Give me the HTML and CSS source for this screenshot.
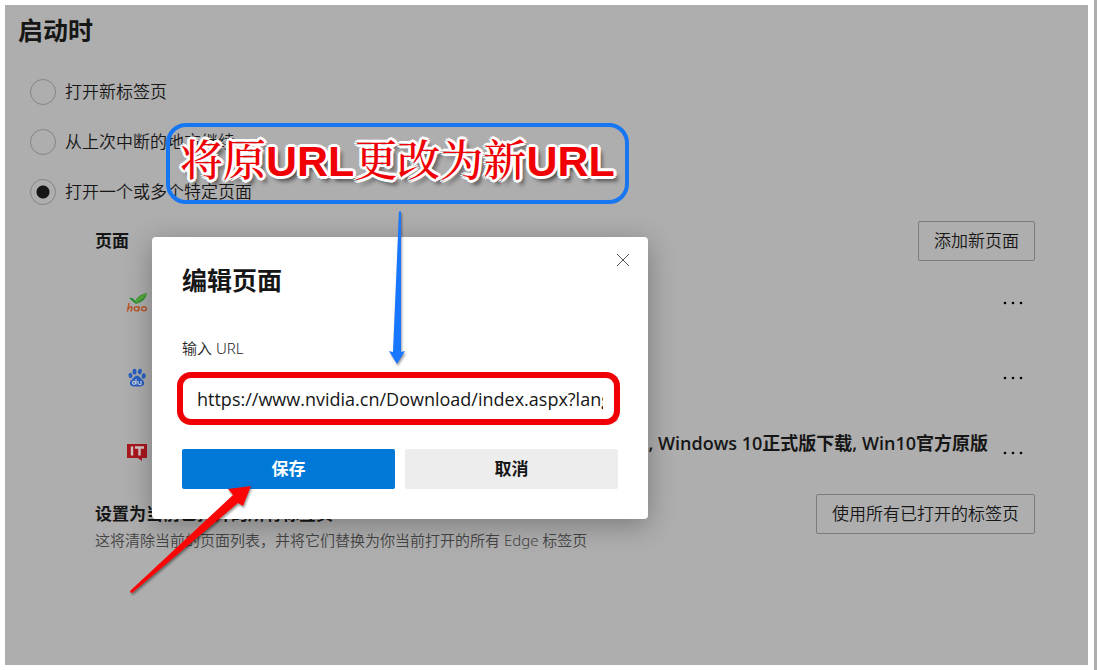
FILE: index.html
```html
<!DOCTYPE html>
<html lang="zh-CN">
<head>
<meta charset="utf-8">
<meta name="viewport" content="width=device-width, initial-scale=1">
<title>启动时</title>
<link rel="stylesheet" href="styles.css">
</head>
<body>
<main class="panel">
  <h1 class="panel-title">启动时</h1>
  <div class="options" role="radiogroup" aria-label="启动时">
    <label class="option"><input class="radio" type="radio" name="startup"><span>打开新标签页</span></label>
    <label class="option"><input class="radio" type="radio" name="startup"><span>从上次中断的地方继续</span></label>
    <label class="option"><input class="radio" type="radio" name="startup" checked><span>打开一个或多个特定页面</span></label>
  </div>
  <section class="pages">
    <div class="pages-head">
      <h2 class="section-title">页面</h2>
      <button class="outline-button" type="button">添加新页面</button>
    </div>
    <ul class="page-list">
      <li class="page-row">
        <svg class="favicon" viewBox="0 0 22 22" aria-hidden="true">
          <path d="M3 6q4-1 6 3Q13 2 21 1q-1 8-11 11Q7 10 3 6z" fill="#2e9136"/>
          <path d="M9 9Q14 3 21 1q-2 5-11 10z" fill="#54a83d"/>
          <g fill="none" stroke="#b9582c" stroke-width="1.500" stroke-linecap="round"><path d="M3 11.500L1.500 19M2 17q4-4 4-1l-1 3"/><ellipse cx="10.500" cy="16.800" rx="2.300" ry="2"/><path d="M13 14.800l-.5 4"/><ellipse cx="18" cy="16.800" rx="2.400" ry="2"/></g>
        </svg>
        <span class="page-name"></span>
        <button class="more" type="button" aria-label="更多操作"><svg viewBox="0 0 20 4" aria-hidden="true"><circle cx="2" cy="2" r="1.300"/><circle cx="10" cy="2" r="1.300"/><circle cx="18" cy="2" r="1.300"/></svg></button>
      </li>
      <li class="page-row">
        <svg class="favicon" viewBox="0 0 22 22" aria-hidden="true">
          <g fill="#2860c4"><ellipse cx="4.500" cy="8.500" rx="2" ry="2.700" transform="rotate(-15 4.500 8.500)"/><ellipse cx="8.500" cy="4.700" rx="2" ry="2.900"/><ellipse cx="13.800" cy="4.700" rx="2" ry="2.900" transform="rotate(10 13.800 4.700)"/><ellipse cx="17.700" cy="9" rx="2" ry="2.700" transform="rotate(12 17.700 9)"/><path d="M11 8.500c2 0 3 2 4.500 3.500 2 1.500 3 3 2.500 5-.5 2-2.500 2.500-7 2.500S4.500 19 4 17c-.5-2 .500-3.500 2.500-5C8 10.500 9 8.500 11 8.500z"/></g>
          <g fill="none" stroke="#c8cfdd" stroke-width="1.200"><circle cx="8" cy="15.800" r="1.500"/><path d="M10 12v5.500M12 14v2q0 1.500 1.500 1.500H15V14"/></g>
        </svg>
        <span class="page-name"></span>
        <button class="more" type="button" aria-label="更多操作"><svg viewBox="0 0 20 4" aria-hidden="true"><circle cx="2" cy="2" r="1.300"/><circle cx="10" cy="2" r="1.300"/><circle cx="18" cy="2" r="1.300"/></svg></button>
      </li>
      <li class="page-row">
        <svg class="favicon" viewBox="0 0 22 22" aria-hidden="true">
          <path d="M1 2h20v14h-5v3l-4-3H1z" fill="#a8181e"/>
          <path d="M6 4.500v9M9 5.500H18M13.500 5.500v8" fill="none" stroke="#d5c5c5" stroke-width="2.400"/>
        </svg>
        <span class="page-name">下载, Windows 10正式版下载, Win10官方原版</span>
        <button class="more" type="button" aria-label="更多操作"><svg viewBox="0 0 20 4" aria-hidden="true"><circle cx="2" cy="2" r="1.300"/><circle cx="10" cy="2" r="1.300"/><circle cx="18" cy="2" r="1.300"/></svg></button>
      </li>
    </ul>
    <div class="current">
      <div class="current-text">
        <h2 class="section-title">设置为当前已打开的所有标签页</h2>
        <p class="hint">这将清除当前的页面列表，并将它们替换为你当前打开的所有 Edge 标签页</p>
      </div>
      <button class="outline-button" type="button">使用所有已打开的标签页</button>
    </div>
  </section>
</main>
<div class="edge-strip"></div>

<form class="dialog" role="dialog" aria-labelledby="dialog-title">
  <button class="close" type="button" aria-label="关闭"><svg viewBox="0 0 14 14" aria-hidden="true"><path d="M1 1l12 12M13 1L1 13"/></svg></button>
  <h2 class="dialog-title" id="dialog-title">编辑页面</h2>
  <label class="field-label" for="url">输入 URL</label>
  <div class="field">
    <input class="url-input" id="url" type="text" value="https://www.nvidia.cn/Download/index.aspx?lang=cn">
    <span class="field-mark"></span>
  </div>
  <div class="actions">
    <button class="action save" type="button">保存</button>
    <button class="action" type="button">取消</button>
  </div>
</form>

<div class="callout">将原<b>URL</b>更改为新<b>URL</b></div>
<svg class="arrow arrow-down" viewBox="0 0 20 156" aria-hidden="true"><path d="M12 2q1-2 2 0l0 140 4-1-8 13-8-13 4 1z"/></svg>
<svg class="arrow arrow-save" viewBox="0 0 126 112" aria-hidden="true"><path d="M1 107L104 11l-5-6 23-3-8 20-5-3L3 109q-2 0-2-2z"/></svg>
</body>
</html>
```
FILE: styles.css
```css
* {
  box-sizing: border-box;
}

body {
  margin: 0;
  padding: 5px 0 5px 5px;
  min-height: 100vh;
  display: flex;
  gap: 6px;
  background: #fff;
  color: #161616;
  font: 17px/26px "Noto Sans", "Noto Sans CJK SC", sans-serif;
}

button,
input {
  font: inherit;
  color: inherit;
}

h1,
h2,
p,
ul {
  margin: 0;
  padding: 0;
}

.panel {
  flex: 1;
  min-width: 0;
  padding: 0 53px 0 13px;
  background: #aeaeae;
}

.edge-strip {
  width: 3px;
  margin: -5px 0;
  background: #aeaeae;
}

.panel-title {
  font-size: 25px;
  line-height: 50px;
}

.options {
  padding: 12px 0 0 12px;
  font-weight: 350;
}

.option {
  display: flex;
  align-items: center;
  gap: 9px;
  height: 50px;
}

.radio {
  appearance: none;
  width: 26px;
  height: 26px;
  margin: 0;
  border: 1px solid #858585;
  border-radius: 50%;
}

.radio:checked {
  background: radial-gradient(circle, #161616 6px, transparent 7px);
}

.pages {
  padding-left: 77px;
}

.pages-head {
  display: flex;
  align-items: center;
  justify-content: space-between;
  height: 48px;
}

.section-title {
  font-size: 17px;
  font-weight: 700;
}

.outline-button {
  height: 40px;
  padding: 0 15px;
  border: 1px solid #7c7c7c;
  border-radius: 2px;
  background: none;
  font-weight: 350;
}

.page-list {
  list-style: none;
}

.page-row {
  display: flex;
  align-items: center;
  height: 75px;
  padding: 0 12px 0 31px;
}

.favicon {
  flex: none;
  width: 22px;
  height: 22px;
}

.page-name {
  flex: 1;
  min-width: 0;
  padding-bottom: 20px;
  overflow: hidden;
  font-family: "Open Sans", "Noto Sans CJK SC", sans-serif;
  font-size: 18px;
  font-weight: 600;
  line-height: 30px;
  text-align: right;
  white-space: nowrap;
}

.more {
  width: 20px;
  height: 20px;
  margin-left: 15px;
  padding: 0;
  border: 0;
  background: none;
}

.more svg {
  display: block;
  width: 20px;
  height: 4px;
}

.current {
  display: flex;
  justify-content: space-between;
  align-items: flex-start;
  padding-top: 4px;
}

.current-text {
  padding-top: 7px;
}

.hint {
  color: #444;
  font-size: 15px;
  font-weight: 350;
}

.dialog {
  position: absolute;
  top: 237px;
  left: 152px;
  width: 496px;
  padding: 23px 30px 30px;
  border-radius: 4px;
  background: #fff;
  box-shadow: 0 6px 28px rgba(0, 0, 0, 0.3);
}

.close {
  position: absolute;
  top: 16px;
  right: 18px;
  width: 14px;
  height: 14px;
  padding: 0;
  border: 0;
  background: none;
}

.close svg {
  display: block;
  fill: none;
  stroke: #555;
}

.dialog-title {
  font-size: 25px;
  line-height: 40px;
}

.field-label {
  display: block;
  margin: 36px 0 16px;
  color: #222;
  font-size: 15px;
  line-height: 24px;
  font-weight: 350;
}

.field {
  position: relative;
  margin-bottom: 27px;
}

.url-input {
  display: block;
  width: 100%;
  height: 46px;
  padding: 0 14px;
  border: 1px solid #ccc;
  border-radius: 2px;
  outline: 0;
  background: #fff;
  font-family: "Open Sans", "Noto Sans CJK SC", sans-serif;
  font-size: 18px;
}

.field-mark {
  position: absolute;
  inset: -4px -2px -3px -5px;
  border: 6px solid #f00005;
  border-radius: 14px;
  pointer-events: none;
}

.actions {
  display: grid;
  grid-template-columns: 1fr 1fr;
  gap: 10px;
}

.action {
  height: 40px;
  border: 0;
  border-radius: 2px;
  background: #ededed;
  font-weight: 700;
}

.save {
  background: #0078d7;
  color: #fff;
}

.callout {
  position: absolute;
  top: 123px;
  left: 166px;
  padding: 0 10px 4px;
  border: 4px solid #1777f2;
  border-radius: 20px;
  color: #f00005;
  font: 500 43px/69px "Liberation Sans", "Noto Serif CJK SC", "Noto Sans CJK SC", sans-serif;
  white-space: nowrap;
  text-shadow: 3px 0 #fff, -3px 0 #fff, 0 3px #fff, 0 -3px #fff, 2px 2px #fff, -2px 2px #fff, 2px -2px #fff, -2px -2px #fff, 4px 5px 4px rgba(0, 0, 0, 0.6);
}

.callout b {
  font-weight: 700;
}

.arrow {
  position: absolute;
  filter: drop-shadow(1px 2px 1px rgba(0, 0, 0, 0.4));
}

.arrow-down {
  top: 210px;
  left: 387px;
  width: 20px;
  height: 156px;
  fill: #1777ff;
}

.arrow-save {
  top: 484px;
  left: 129px;
  width: 126px;
  height: 112px;
  fill: #fa0606;
}
```
